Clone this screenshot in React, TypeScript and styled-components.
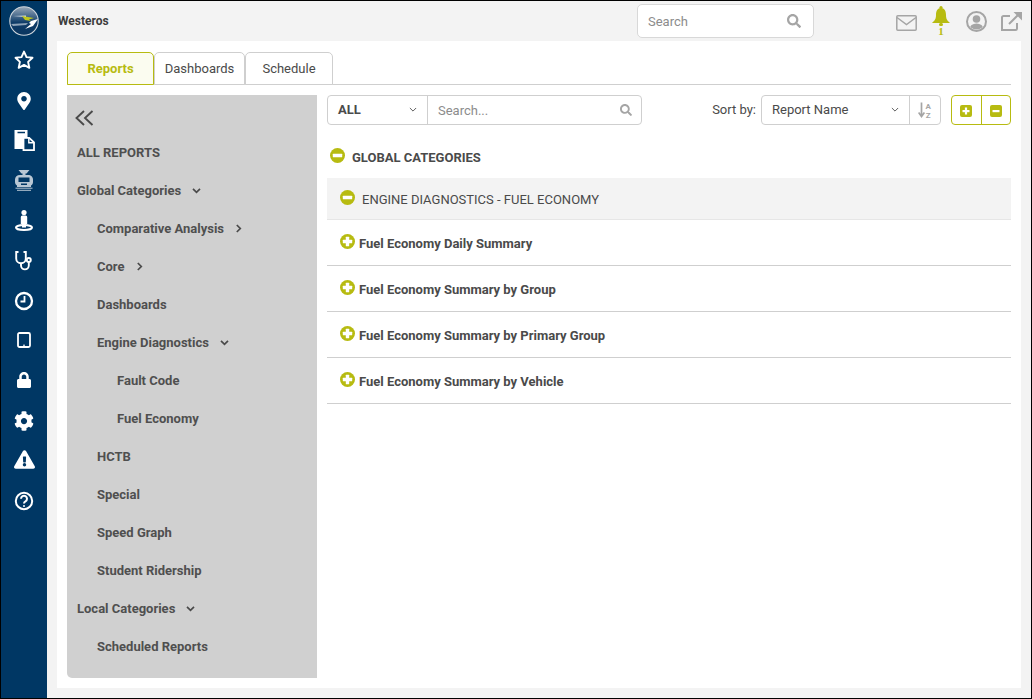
import React from "react";
import styled, { createGlobalStyle } from "styled-components";
import { FaMapMarkerAlt, FaLock, FaCog, FaExclamationTriangle, FaSearch } from "react-icons/fa";

const Global = createGlobalStyle`
  html, body { margin: 0; padding: 0; width: 1032px; height: 699px; overflow: hidden; background: #000; }
  * { box-sizing: border-box; }
  body { font-family: Roboto, "Liberation Sans", sans-serif; color: #4a4a4a; }
`;

const Frame = styled.div`
  width: 1032px; height: 699px; border: 1px solid #000; display: flex; background: #f3f3f3;
`;
const Rail = styled.nav`
  width: 46px; background: #003764; display: flex; flex-direction: column; align-items: center; flex: none;
`;
const LogoSlot = styled.div`
  height: 39px; display: flex; align-items: center; justify-content: center; width: 100%;
`;
const RailItem = styled.div<{ $dy?: number }>`
  height: 40px; width: 100%; display: flex; align-items: center; justify-content: center; color: #fff;
  padding-top: ${(p) => Math.max(p.$dy ?? 0, 0) * 2}px;
  padding-bottom: ${(p) => Math.max(-(p.$dy ?? 0), 0) * 2}px;
`;
const RailList = styled.div`
  width: 100%; display: flex; flex-direction: column;
`;
const Main = styled.div`
  flex: 1; display: flex; flex-direction: column; min-width: 0;
`;
const TopBar = styled.header`
  height: 40px; display: flex; align-items: center; padding: 0 2px 0 11px; flex: none;
`;
const Brand = styled.div`
  font-size: 12px; font-weight: 700; color: #3c3c3c; width: 579px;
`;
const TopSearch = styled.div`
  width: 177px; height: 34px; background: #fff; border: 1px solid #d8d8d8; border-radius: 5px;
  display: flex; align-items: center; justify-content: space-between; padding: 0 12px 0 10px;
  font-size: 13px; color: #8c8c8c;
`;
const TopIcons = styled.div`
  flex: 1; display: flex; align-items: center; justify-content: flex-end; color: #a5a5a5;
`;
const TopIcon = styled.div<{ $w: number }>`
  width: ${(p) => p.$w}px; display: flex; justify-content: center; align-items: center; position: relative; height: 36px;
`;
const BellCount = styled.span`
  position: absolute; top: 22px; left: 50%; transform: translateX(-50%); font-family: "Liberation Serif", serif; font-size: 11px; font-weight: 700; color: #b7bb11; line-height: 12px;
`;
const Sheet = styled.main`
  flex: 1; margin: 0 10px 10px 10px; background: #fff; padding: 11px 10px 10px 10px; display: flex; flex-direction: column; min-height: 0;
`;
const Tabs = styled.div`
  display: flex; height: 33px; border-bottom: 1px solid #cfcfcf; flex: none;
`;
const Tab = styled.div<{ $active?: boolean; $w: number }>`
  width: ${(p) => p.$w}px; height: 33px; border: 1px solid ${(p) => (p.$active ? "#b7bb11" : "#cfcfcf")};
  border-radius: 5px 5px 0 0; background: ${(p) => (p.$active ? "#fbfcf0" : "#fff")};
  color: ${(p) => (p.$active ? "#b7bb11" : "#4a4a4a")}; font-size: 13px; font-weight: ${(p) => (p.$active ? 700 : 400)};
  display: flex; align-items: center; justify-content: center;
`;
const Body = styled.div`
  flex: 1; display: flex; gap: 10px; padding-top: 10px; min-height: 0;
`;
const Panel = styled.aside`
  width: 250px; background: #d0d0d0; border-radius: 0 0 0 5px; padding: 0 10px; flex: none;
`;
const Collapse = styled.div`
  height: 38px; padding-top: 8px; display: flex; align-items: center; color: #4a4a4a; margin-left: -2px;
`;
const NavRow = styled.div<{ $level?: number }>`
  height: 38px; display: flex; align-items: center; padding-left: ${(p) => (p.$level ?? 0) * 20}px;
  font-size: 13px; font-weight: 700; color: #4f4f4f; gap: 11px;
`;
const Content = styled.section`
  flex: 1; min-width: 0;
`;
const Toolbar = styled.div`
  display: flex; align-items: center; height: 30px;
`;
const Filter = styled.div`
  width: 315px; height: 30px; border: 1px solid #cfcfcf; border-radius: 4px; display: flex; font-size: 13px;
`;
const FilterSelect = styled.div`
  width: 100px; border-right: 1px solid #cfcfcf; display: flex; align-items: center; justify-content: space-between;
  padding: 0 10px 2px 10px; font-weight: 700; color: #4a4a4a;
`;
const FilterInput = styled.div`
  flex: 1; display: flex; align-items: center; justify-content: space-between; padding: 0 9px 0 10px; color: #8c8c8c;
`;
const SortLabel = styled.span`
  margin-left: auto; font-size: 13px; color: #4a4a4a; margin-right: 5px; padding-bottom: 2px;
`;
const SortBox = styled.div`
  width: 180px; height: 30px; border: 1px solid #cfcfcf; border-radius: 4px; display: flex; font-size: 13px; color: #4a4a4a;
`;
const SortSelect = styled.div`
  flex: 1; border-right: 1px solid #cfcfcf; display: flex; align-items: center; justify-content: space-between; padding: 0 10px 2px 10px;
`;
const SortOrder = styled.div`
  width: 30px; display: flex; align-items: center; justify-content: center; color: #a5a5a5;
`;
const ExpandBox = styled.div`
  margin-left: 10px; width: 60px; height: 30px; border: 1px solid #b7bb11; border-radius: 4px; display: flex;
`;
const ExpandBtn = styled.div<{ $divider?: boolean }>`
  flex: 1; display: flex; align-items: center; justify-content: center; padding-top: 2px;
  ${(p) => (p.$divider ? "border-right: 1px solid #b7bb11;" : "")}
`;
const GroupHead = styled.div`
  height: 53px; display: flex; align-items: center; padding: 11px 0 0 3px; gap: 7px; font-size: 13px; font-weight: 700; color: #4a4a4a;
`;
const SubHead = styled.div`
  height: 42px; background: #f3f3f3; border-bottom: 1px solid #e6e6e6; display: flex; align-items: center; padding: 2px 0 0 13px; gap: 7px;
  font-size: 13px; color: #4a4a4a;
`;
const ReportRow = styled.div`
  height: 46px; border-bottom: 1px solid #cfcfcf; display: flex; align-items: center; padding: 2px 0 0 13px; gap: 4px;
  font-size: 13px; font-weight: 700; color: #4a4a4a;
`;

const Svg = styled.svg`
  display: block; flex: none;
`;
const RollSvg = styled.svg`
  display: block; flex: none; margin-bottom: 4px;
`;

const Logo = () => (
  <Svg width="30" height="30" viewBox="0 0 30 30" style={{ marginTop: 1 }}>
    <defs>
      <linearGradient id="sky" x1="0" y1="0" x2="0" y2="1">
        <stop offset="0" stopColor="#9aa9b8" />
        <stop offset="0.3" stopColor="#4f6f90" />
        <stop offset="0.55" stopColor="#0f3c68" />
        <stop offset="1" stopColor="#0a355f" />
      </linearGradient>
    </defs>
    <circle cx="15" cy="15" r="14.200" fill="url(#sky)" stroke="#cfd6dc" strokeWidth="1.100" />
    <path d="M4 10L17 9.500V11Z" fill="#dfe5ea" />
    <path d="M2 18L19 17 17 19 4 20Z" fill="#8ea3b8" />
    <path d="M13 10L25 12 20 13.500 22 15 16 14Z" fill="#bfc51e" />
    <path d="M29 13L22 15 20 17 22 18 16 23 24 20Z" fill="#fff" />
  </Svg>
);
const Star = () => (
  <Svg width="20" height="19" viewBox="0 0 20 19"><path d="M10 1.600l2.500 5.500 6 .7-4.400 4.100 1.200 5.900L10 14.900l-5.300 2.900 1.200-5.900L1.500 7.800l6-.7z" fill="none" stroke="#fff" strokeWidth="1.900" strokeLinejoin="round" /></Svg>
);
const Docs = () => (
  <Svg width="21" height="21" viewBox="0 0 21 21">
    <path d="M0.500 0h13v7H9v12H0.500z" fill="#fff" />
    <path d="M3.500 2.500h7.500" stroke="#003764" strokeWidth="1.500" />
    <path d="M9.500 7.800h5.700l4.800 4.600v7.700H9.500z" fill="#003764" stroke="#fff" strokeWidth="1.800" />
    <path d="M14.800 8v4.800h5" fill="none" stroke="#fff" strokeWidth="1.400" />
  </Svg>
);
const Bus = () => (
  <Svg width="20" height="21" viewBox="0 0 20 21" style={{ opacity: 0.72 }}>
    <path d="M4.500 0h11l-3 3.500h-5z" fill="#fff" />
    <rect x="8.500" y="3" width="3" height="3" fill="#fff" />
    <path d="M6 5h8c3 0 5 2 5 4.500V12c0 2-1 3-2 3.500V17H3v-1.500C2 15 1 14 1 12V9.500C1 7 3 5 6 5z" fill="#fff" />
    <rect x="4.500" y="7.500" width="11" height="4.500" fill="#003764" />
    <rect x="7" y="13.500" width="6" height="1.500" fill="#003764" />
    <path d="M1.500 18.200h17M3 20.300h14" stroke="#fff" strokeWidth="1" />
  </Svg>
);
const Person = () => (
  <Svg width="20" height="21" viewBox="0 0 20 21">
    <circle cx="10" cy="2.600" r="2.600" fill="#fff" />
    <path d="M6.800 7a1.500 1.500 0 0 1 1.500-1.500h3.400A1.500 1.500 0 0 1 13.200 7v7h-6.400z" fill="#fff" />
    <ellipse cx="10" cy="17.500" rx="8" ry="2.500" fill="none" stroke="#fff" strokeWidth="2" />
    <path d="M8 13h4v4.500H8z" fill="#fff" />
  </Svg>
);
const Stethoscope = () => (
  <Svg width="20" height="20" viewBox="0 0 20 20" fill="none" stroke="#fff" strokeWidth="1.900">
    <path d="M4.500 1H2.200v6.500a4.800 4.800 0 0 0 9.600 0V1H9.500" />
    <path d="M7 12.500v2a3.900 3.900 0 0 0 7.800 0v-3.200" />
    <circle cx="14.800" cy="9" r="2" />
  </Svg>
);
const Clock = () => (
  <Svg width="20" height="20" viewBox="0 0 20 20" fill="none" stroke="#fff" strokeWidth="2.300">
    <circle cx="10" cy="10" r="8" />
    <path d="M10.500 5v5.500H6.500" strokeWidth="1.800" />
  </Svg>
);
const Tablet = () => (
  <Svg width="14" height="16" viewBox="0 0 14 16">
    <rect x="1" y="1" width="12" height="14" rx="1.500" fill="none" stroke="#fff" strokeWidth="1.800" />
    <rect x="6" y="12.700" width="2" height="1" fill="#fff" />
  </Svg>
);
const Help = () => (
  <Svg width="20" height="20" viewBox="0 0 20 20" fill="none" stroke="#fff" strokeWidth="2">
    <circle cx="10" cy="10" r="8.200" />
    <path d="M7 7.800a3 3 0 1 1 4.500 2.600c-1 .6-1.500 1-1.500 2.100" />
    <circle cx="10" cy="15" r="0.600" fill="#fff" strokeWidth="1" />
  </Svg>
);
const Mail = () => (
  <Svg width="21" height="16" viewBox="0 0 21 16" fill="none" stroke="#a5a5a5" strokeWidth="1.500" style={{ marginTop: 3 }}>
    <rect x="0.800" y="0.800" width="19.400" height="14.400" rx="1" />
    <path d="M1 2.500l9.500 7 9.500-7" />
  </Svg>
);
const Bell = () => (
  <Svg width="18" height="21" viewBox="0 0 18 21" style={{ marginTop: -9 }}>
    <circle cx="9" cy="1.600" r="1.600" fill="#b7bb11" />
    <path d="M9 2C5.500 2 4 5 4 9c0 4-1.200 5.500-4 8h18c-2.800-2.500-4-4-4-8 0-4-1.500-7-5-7z" fill="#b7bb11" />
    <rect x="7" y="17" width="4" height="3" rx="1.500" fill="#b7bb11" />
  </Svg>
);
const User = () => (
  <Svg width="21" height="21" viewBox="0 0 21 21">
    <defs>
      <clipPath id="face"><circle cx="10.500" cy="10.500" r="8" /></clipPath>
    </defs>
    <circle cx="10.500" cy="10.500" r="9.500" fill="none" stroke="#a5a5a5" strokeWidth="2" />
    <g clipPath="url(#face)" fill="#a5a5a5">
      <circle cx="10.500" cy="8" r="3.800" />
      <ellipse cx="10.500" cy="18" rx="7" ry="5.500" />
    </g>
  </Svg>
);
const External = () => (
  <Svg width="21" height="19" viewBox="0 0 21 19" fill="none" stroke="#a5a5a5" strokeWidth="2">
    <path d="M9 4H2.500A1.500 1.500 0 0 0 1 5.500V18h13.500a1.500 1.500 0 0 0 1.500-1.500V11" />
    <path d="M8 12L17 3" />
    <path d="M12.500 0H21v8.500z" fill="#a5a5a5" stroke="none" />
  </Svg>
);
const Roll = ({ open }: { open?: boolean }) => (
  <RollSvg width="15" height="15" viewBox="0 0 15 15">
    <circle cx="7.500" cy="7.500" r="7.500" fill="#b7bb11" />
    <rect x="2.800" y="5.800" width="9.400" height="3.400" rx="0.500" fill="#fff" />
    {!open && <rect x="5.800" y="2.800" width="3.400" height="9.400" rx="0.500" fill="#fff" />}
  </RollSvg>
);
const Square = ({ plus }: { plus?: boolean }) => (
  <Svg width="12" height="12" viewBox="0 0 12 12">
    <rect width="12" height="12" rx="2" fill="#b7bb11" />
    <rect x="2.500" y="5" width="7" height="2.200" fill="#fff" />
    {plus && <rect x="4.900" y="2.500" width="2.200" height="7" fill="#fff" />}
  </Svg>
);
const Chev = ({ dir, thin }: { dir: "down" | "right"; thin?: boolean }) => (
  <Svg width={thin ? 8 : 9} height="9" viewBox="0 0 9 9" fill="none" stroke={thin ? "#5c5c5c" : "#4a4a4a"} strokeWidth={thin ? 1.1 : 1.7}>
    {dir === "down" ? <path d="M1 2.800l3.500 3.500L8 2.800" /> : <path d="M1.800 1l3.500 3.500L1.800 8" />}
  </Svg>
);
const Rewind = () => (
  <Svg width="19" height="16" viewBox="0 0 19 16" fill="none" stroke="#4a4a4a" strokeWidth="1.900">
    <path d="M9 1L1.500 8 9 15" />
    <path d="M17.500 1L10 8l7.500 7" />
  </Svg>
);
const SortAz = () => (
  <Svg width="14" height="16" viewBox="0 0 14 16">
    <path d="M3.500 0.500v13M0.600 10.500l2.900 4 2.900-4" fill="none" stroke="#a5a5a5" strokeWidth="1.700" />
    <text x="7.500" y="7" fontSize="8" fontWeight="700" fill="#a5a5a5" fontFamily="Roboto, sans-serif">A</text>
    <text x="7.800" y="15.500" fontSize="8" fontWeight="700" fill="#a5a5a5" fontFamily="Roboto, sans-serif">Z</text>
  </Svg>
);

const nav: { label: string; level?: number; chev?: "down" | "right" }[] = [
  { label: "ALL REPORTS" },
  { label: "Global Categories", chev: "down" },
  { label: "Comparative Analysis", level: 1, chev: "right" },
  { label: "Core", level: 1, chev: "right" },
  { label: "Dashboards", level: 1 },
  { label: "Engine Diagnostics", level: 1, chev: "down" },
  { label: "Fault Code", level: 2 },
  { label: "Fuel Economy", level: 2 },
  { label: "HCTB", level: 1 },
  { label: "Special", level: 1 },
  { label: "Speed Graph", level: 1 },
  { label: "Student Ridership", level: 1 },
  { label: "Local Categories", chev: "down" },
  { label: "Scheduled Reports", level: 1 },
];
const reports = [
  "Fuel Economy Daily Summary",
  "Fuel Economy Summary by Group",
  "Fuel Economy Summary by Primary Group",
  "Fuel Economy Summary by Vehicle",
];
const railIcons: { icon: React.ReactNode; dy: number }[] = [
  { icon: <Star />, dy: -1 },
  { icon: <FaMapMarkerAlt size={18} />, dy: 1 },
  { icon: <Docs />, dy: 0 },
  { icon: <Bus />, dy: 0 },
  { icon: <Person />, dy: 0 },
  { icon: <Stethoscope />, dy: 1 },
  { icon: <Clock />, dy: 1 },
  { icon: <Tablet />, dy: 0 },
  { icon: <FaLock size={16} />, dy: 0 },
  { icon: <FaCog size={20} />, dy: 1 },
  { icon: <FaExclamationTriangle size={21} />, dy: -1 },
  { icon: <Help />, dy: 1 },
];

export default function App() {
  return (
    <>
      <Global />
      <Frame>
        <Rail>
          <LogoSlot><Logo /></LogoSlot>
          <RailList>
            {railIcons.map((r, i) => <RailItem key={i} $dy={r.dy}>{r.icon}</RailItem>)}
          </RailList>
        </Rail>
        <Main>
          <TopBar>
            <Brand>Westeros</Brand>
            <TopSearch>Search<FaSearch size={14} color="#a5a5a5" /></TopSearch>
            <TopIcons>
              <TopIcon $w={33}><Mail /></TopIcon>
              <TopIcon $w={36}><Bell /><BellCount>1</BellCount></TopIcon>
              <TopIcon $w={35}><User /></TopIcon>
              <TopIcon $w={35}><External /></TopIcon>
            </TopIcons>
          </TopBar>
          <Sheet>
            <Tabs>
              <Tab $active $w={87}>Reports</Tab>
              <Tab $w={91}>Dashboards</Tab>
              <Tab $w={88}>Schedule</Tab>
            </Tabs>
            <Body>
              <Panel>
                <Collapse><Rewind /></Collapse>
                {nav.map((n) => (
                  <NavRow key={n.label} $level={n.level}>
                    {n.label}
                    {n.chev && <Chev dir={n.chev} />}
                  </NavRow>
                ))}
              </Panel>
              <Content>
                <Toolbar>
                  <Filter>
                    <FilterSelect>ALL<Chev dir="down" thin /></FilterSelect>
                    <FilterInput>Search...<FaSearch size={12} color="#a5a5a5" /></FilterInput>
                  </Filter>
                  <SortLabel>Sort by:</SortLabel>
                  <SortBox>
                    <SortSelect>Report Name<Chev dir="down" thin /></SortSelect>
                    <SortOrder><SortAz /></SortOrder>
                  </SortBox>
                  <ExpandBox>
                    <ExpandBtn $divider><Square plus /></ExpandBtn>
                    <ExpandBtn><Square /></ExpandBtn>
                  </ExpandBox>
                </Toolbar>
                <GroupHead><Roll open />GLOBAL CATEGORIES</GroupHead>
                <SubHead><Roll open />ENGINE DIAGNOSTICS - FUEL ECONOMY</SubHead>
                {reports.map((r) => (
                  <ReportRow key={r}><Roll />{r}</ReportRow>
                ))}
              </Content>
            </Body>
          </Sheet>
        </Main>
      </Frame>
    </>
  );
}
